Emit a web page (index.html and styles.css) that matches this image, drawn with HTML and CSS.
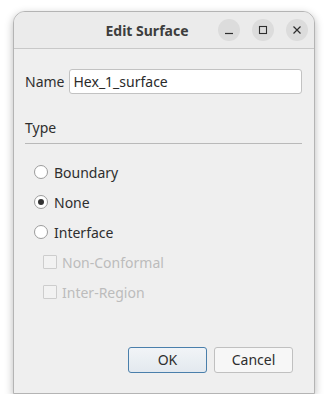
FILE: index.html
```html
<!DOCTYPE html>
<html lang="en">
<head>
    <meta charset="UTF-8">
    <title>Edit Surface</title>
    <link rel="stylesheet" href="styles.css">
</head>
<body>
    <div class="window">
        <div class="titlebar">
            <div class="title">Edit Surface</div>
            <div class="wm-buttons">
                <span class="wm-btn">
                    <svg width="10" height="10" viewBox="0 0 10 10"><path d="M1 8.5h8" stroke="#2e2e2e" stroke-width="1.2"/></svg>
                </span>
                <span class="wm-btn">
                    <svg width="10" height="10" viewBox="0 0 10 10"><rect x="1.5" y="1.5" width="7" height="7" fill="none" stroke="#2e2e2e" stroke-width="1.1"/></svg>
                </span>
                <span class="wm-btn">
                    <svg width="10" height="10" viewBox="0 0 10 10"><path d="M1.5 1.5l7 7M8.5 1.5l-7 7" stroke="#2e2e2e" stroke-width="1.2"/></svg>
                </span>
            </div>
        </div>

        <div class="content">
            <div class="name-row">
                <label class="name-label">Name</label>
                <div class="text-input">Hex_1_surface</div>
            </div>

            <div class="group-title">Type</div>

            <div class="options">
                <div class="option">
                    <span class="radio"></span>
                    <span>Boundary</span>
                </div>
                <div class="option">
                    <span class="radio checked"></span>
                    <span>None</span>
                </div>
                <div class="option">
                    <span class="radio"></span>
                    <span>Interface</span>
                </div>
                <div class="option sub disabled">
                    <span class="check"></span>
                    <span>Non-Conformal</span>
                </div>
                <div class="option sub disabled">
                    <span class="check"></span>
                    <span>Inter-Region</span>
                </div>
            </div>

            <div class="buttons">
                <div class="btn default">OK</div>
                <div class="btn">Cancel</div>
            </div>
        </div>
    </div>
</body>
</html>
```

FILE: styles.css
```css
body {
    margin: 0;
    padding: 11px 0 0 13px;
    background-color: #ffffff;
    font-family: 'Noto Sans', sans-serif;
    font-size: 14px;
    color: #3c3c3c;
}

.window {
    width: 300px;
    height: 381px;
    display: flex;
    flex-direction: column;
    background-color: #efefef;
    border: 1px solid #b4b4b4;
    border-radius: 12px 12px 0 0;
    box-shadow: 0 3px 9px rgba(0,0,0,0.28);
}

.titlebar {
    height: 36px;
    display: flex;
    align-items: center;
    padding: 0 6px 0 66px;
    background-color: #ebebeb;
    border-bottom: 1px solid #c8c8c8;
    border-radius: 11px 11px 0 0;
}

.title {
    flex: 1;
    text-align: center;
    font-weight: bold;
    font-size: 14px;
    color: #3d3d3d;
}

.wm-buttons {
    display: flex;
    gap: 12px;
    margin-left: 4px;
}

.wm-btn {
    width: 22px;
    height: 22px;
    border-radius: 50%;
    background-color: #dcdcdc;
    display: flex;
    align-items: center;
    justify-content: center;
}

.content {
    flex: 1;
    display: flex;
    flex-direction: column;
    padding: 20px 12px 20px 11px;
}

.name-row {
    display: flex;
    align-items: center;
    gap: 5px;
    height: 25px;
}

.name-label {
    color: #2e2e2e;
}

.text-input {
    flex: 1;
    height: 23px;
    line-height: 23px;
    padding: 0 3px;
    background-color: #ffffff;
    border: 1px solid #c2c2c2;
    border-radius: 3px;
    color: #2a2a2a;
}

.group-title {
    margin-top: 24px;
    padding-bottom: 6px;
    border-bottom: 1px solid #b9b9b9;
    line-height: 19px;
    color: #2e2e2e;
}

.options {
    margin-top: 13px;
    display: flex;
    flex-direction: column;
}

.option {
    height: 30px;
    display: flex;
    align-items: center;
    gap: 6px;
    padding-left: 9px;
    color: #2e2e2e;
}

.option.sub {
    padding-left: 18px;
    gap: 5px;
}

.option.disabled {
    color: #bcbcbc;
}

.radio {
    width: 12px;
    height: 12px;
    border: 1px solid #9c9c9c;
    border-radius: 50%;
    background-color: #ffffff;
    display: flex;
    align-items: center;
    justify-content: center;
}

.radio.checked::after {
    content: "";
    width: 6px;
    height: 6px;
    border-radius: 50%;
    background-color: #333333;
}

.check {
    width: 12px;
    height: 12px;
    border: 1px solid #cdcdcd;
    border-radius: 1px;
    background-color: #f2f2f2;
}

.buttons {
    margin-top: auto;
    display: flex;
    justify-content: flex-end;
    gap: 7px;
    padding-right: 9px;
}

.btn {
    width: 77px;
    height: 24px;
    line-height: 24px;
    text-align: center;
    border: 1px solid #c0c0c0;
    border-radius: 3px;
    background-color: #f7f7f7;
    color: #2e2e2e;
}

.btn.default {
    border-color: #4a7fab;
    background: linear-gradient(#f1f4f7, #e3e9ef);
}
```
